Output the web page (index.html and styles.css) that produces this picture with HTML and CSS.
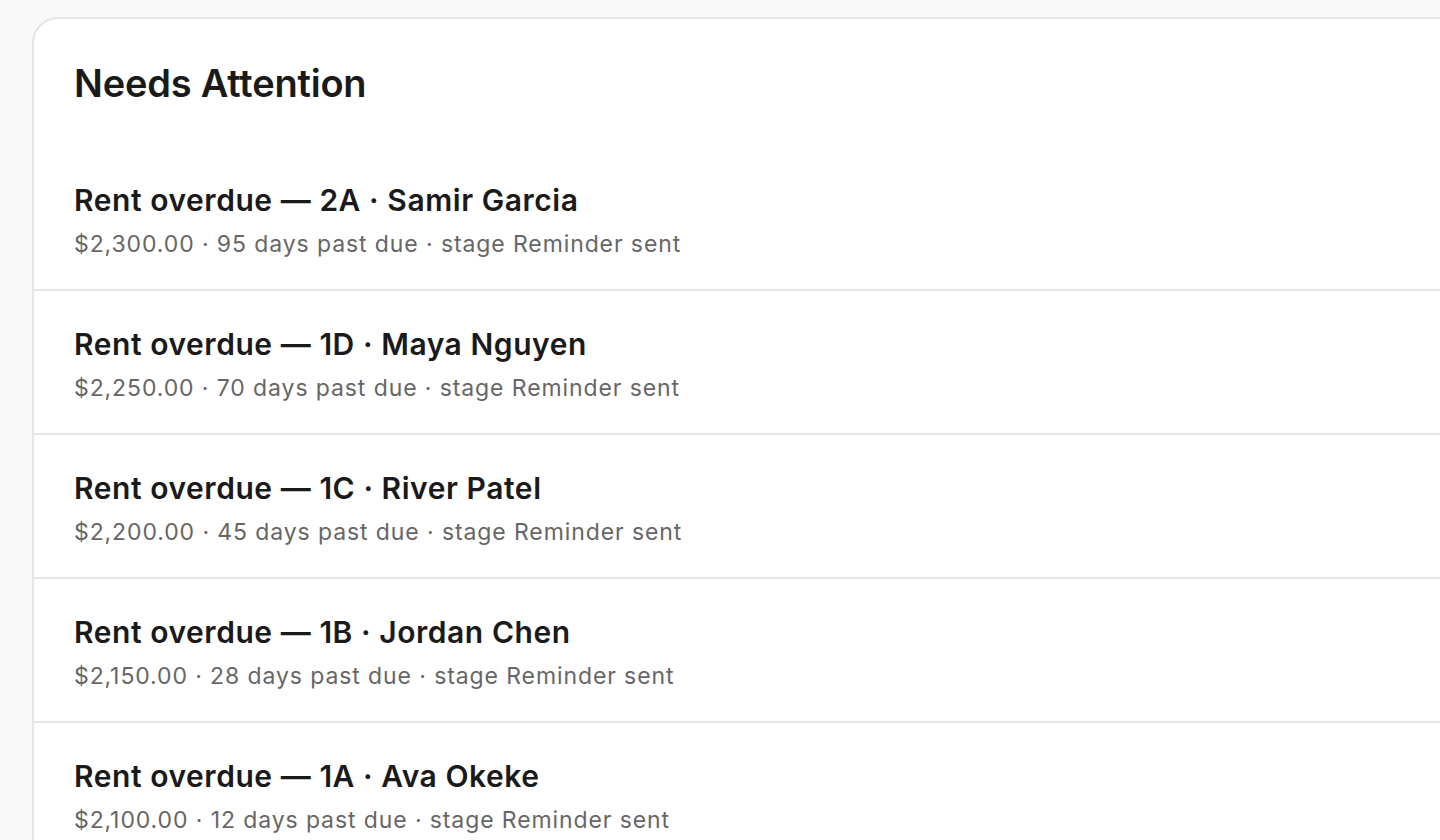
FILE: index.html
```html
<!DOCTYPE html>
<html lang="en">
<head>
<meta charset="utf-8">
<title>Needs Attention</title>
<link rel="stylesheet" href="styles.css">
</head>
<body>
<main class="page">
  <section class="card">
    <header class="card-header">
      <h2 class="card-title">Needs Attention</h2>
    </header>
    <ul class="list">
      <li class="item">
        <div class="item-title">Rent overdue — 2A · Samir Garcia</div>
        <div class="item-meta">$2,300.00 · 95 days past due · stage Reminder sent</div>
      </li>
      <li class="item">
        <div class="item-title">Rent overdue — 1D · Maya Nguyen</div>
        <div class="item-meta">$2,250.00 · 70 days past due · stage Reminder sent</div>
      </li>
      <li class="item">
        <div class="item-title">Rent overdue — 1C · River Patel</div>
        <div class="item-meta">$2,200.00 · 45 days past due · stage Reminder sent</div>
      </li>
      <li class="item">
        <div class="item-title">Rent overdue — 1B · Jordan Chen</div>
        <div class="item-meta">$2,150.00 · 28 days past due · stage Reminder sent</div>
      </li>
      <li class="item">
        <div class="item-title">Rent overdue — 1A · Ava Okeke</div>
        <div class="item-meta">$2,100.00 · 12 days past due · stage Reminder sent</div>
      </li>
    </ul>
  </section>
</main>
</body>
</html>
```

FILE: styles.css
```css
html, body {
  margin: 0;
  padding: 0;
  height: 100%;
  overflow: hidden;
  background: #f9f9f9;
  font-family: Inter, "Noto Sans", sans-serif;
  color: #1a1a1a;
}

.page {
  padding: 17px 0 0 32px;
}

.card {
  width: 1500px;
  background: #ffffff;
  border: 2px solid #e5e5e5;
  border-radius: 26px;
}

.card-header {
  padding: 40px 40px 40px;
}

.card-title {
  margin: 0;
  font-size: 38px;
  line-height: 48px;
  font-weight: 600;
  letter-spacing: -0.2px;
  color: #1a1a1a;
}

.list {
  list-style: none;
  margin: 0;
  padding: 0;
}

.item {
  display: flex;
  flex-direction: column;
  gap: 12px;
  padding: 35px 40px 31px;
  border-bottom: 2px solid #e5e5e5;
}

.item-title {
  font-size: 30px;
  line-height: 36px;
  font-weight: 600;
  letter-spacing: 0.55px;
  color: #1a1a1a;
}

.item-meta {
  font-size: 23px;
  line-height: 28px;
  font-weight: 400;
  letter-spacing: 0.9px;
  color: #666666;
}
```
